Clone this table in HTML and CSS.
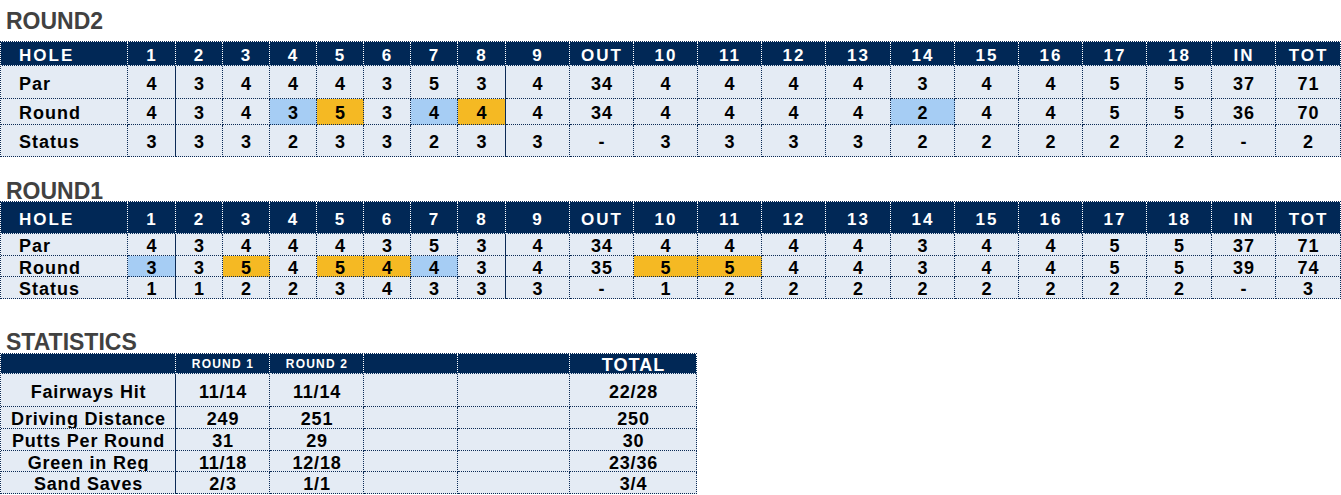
FILE: index.html
```html
<!DOCTYPE html>
<html>
<head>
<meta charset="utf-8">
<link rel="stylesheet" href="styles.css">
</head>
<body>
<section class="block">
  <h2 class="title title-first">ROUND2</h2>
  <div class="sheet rows-r2">
    <div class="c hd lbl">HOLE</div><div class="c hd">1</div><div class="c hd">2</div><div class="c hd">3</div><div class="c hd">4</div><div class="c hd">5</div><div class="c hd">6</div><div class="c hd">7</div><div class="c hd">8</div><div class="c hd">9</div><div class="c hd">OUT</div><div class="c hd">10</div><div class="c hd">11</div><div class="c hd">12</div><div class="c hd">13</div><div class="c hd">14</div><div class="c hd">15</div><div class="c hd">16</div><div class="c hd">17</div><div class="c hd">18</div><div class="c hd">IN</div><div class="c hd">TOT</div>

    <div class="c lbl">Par</div><div class="c sep">4</div><div class="c">3</div><div class="c">4</div><div class="c">4</div><div class="c">4</div><div class="c">3</div><div class="c">5</div><div class="c sep">3</div><div class="c">4</div><div class="c">34</div><div class="c">4</div><div class="c">4</div><div class="c">4</div><div class="c">4</div><div class="c">3</div><div class="c">4</div><div class="c">4</div><div class="c">5</div><div class="c">5</div><div class="c">37</div><div class="c">71</div>

    <div class="c lbl">Round</div><div class="c sep">4</div><div class="c">3</div><div class="c">4</div><div class="c blue">3</div><div class="c gold">5</div><div class="c">3</div><div class="c blue">4</div><div class="c gold sep">4</div><div class="c">4</div><div class="c">34</div><div class="c">4</div><div class="c">4</div><div class="c">4</div><div class="c">4</div><div class="c blue">2</div><div class="c">4</div><div class="c">4</div><div class="c">5</div><div class="c">5</div><div class="c">36</div><div class="c">70</div>

    <div class="c lbl">Status</div><div class="c sep">3</div><div class="c">3</div><div class="c">3</div><div class="c">2</div><div class="c">3</div><div class="c">3</div><div class="c">2</div><div class="c sep">3</div><div class="c">3</div><div class="c">-</div><div class="c">3</div><div class="c">3</div><div class="c">3</div><div class="c">3</div><div class="c">2</div><div class="c">2</div><div class="c">2</div><div class="c">2</div><div class="c">2</div><div class="c">-</div><div class="c">2</div>
  </div>
</section>

<section class="block">
  <h2 class="title title-second">ROUND1</h2>
  <div class="sheet rows-r1">
    <div class="c hd lbl">HOLE</div><div class="c hd">1</div><div class="c hd">2</div><div class="c hd">3</div><div class="c hd">4</div><div class="c hd">5</div><div class="c hd">6</div><div class="c hd">7</div><div class="c hd">8</div><div class="c hd">9</div><div class="c hd">OUT</div><div class="c hd">10</div><div class="c hd">11</div><div class="c hd">12</div><div class="c hd">13</div><div class="c hd">14</div><div class="c hd">15</div><div class="c hd">16</div><div class="c hd">17</div><div class="c hd">18</div><div class="c hd">IN</div><div class="c hd">TOT</div>

    <div class="c lbl">Par</div><div class="c sep">4</div><div class="c">3</div><div class="c">4</div><div class="c">4</div><div class="c">4</div><div class="c">3</div><div class="c">5</div><div class="c sep">3</div><div class="c">4</div><div class="c">34</div><div class="c">4</div><div class="c">4</div><div class="c">4</div><div class="c">4</div><div class="c">3</div><div class="c">4</div><div class="c">4</div><div class="c">5</div><div class="c">5</div><div class="c">37</div><div class="c">71</div>

    <div class="c lbl">Round</div><div class="c blue sep">3</div><div class="c">3</div><div class="c gold">5</div><div class="c">4</div><div class="c gold">5</div><div class="c gold">4</div><div class="c blue">4</div><div class="c sep">3</div><div class="c">4</div><div class="c">35</div><div class="c gold">5</div><div class="c gold">5</div><div class="c">4</div><div class="c">4</div><div class="c">3</div><div class="c">4</div><div class="c">4</div><div class="c">5</div><div class="c">5</div><div class="c">39</div><div class="c">74</div>

    <div class="c lbl">Status</div><div class="c sep">1</div><div class="c">1</div><div class="c">2</div><div class="c">2</div><div class="c">3</div><div class="c">4</div><div class="c">3</div><div class="c sep">3</div><div class="c">3</div><div class="c">-</div><div class="c">1</div><div class="c">2</div><div class="c">2</div><div class="c">2</div><div class="c">2</div><div class="c">2</div><div class="c">2</div><div class="c">2</div><div class="c">2</div><div class="c">-</div><div class="c">3</div>
  </div>
</section>

<section class="block">
  <h2 class="title title-third">STATISTICS</h2>
  <div class="stats">
    <div class="c hd"></div><div class="c hd small">ROUND 1</div><div class="c hd small">ROUND 2</div><div class="c hd"></div><div class="c hd"></div><div class="c hd big">TOTAL</div>

    <div class="c st sep">Fairways Hit</div><div class="c st">11/14</div><div class="c st">11/14</div><div class="c st"></div><div class="c st"></div><div class="c st">22/28</div>
    <div class="c st sep">Driving Distance</div><div class="c st">249</div><div class="c st">251</div><div class="c st"></div><div class="c st"></div><div class="c st">250</div>
    <div class="c st sep">Putts Per Round</div><div class="c st">31</div><div class="c st">29</div><div class="c st"></div><div class="c st"></div><div class="c st">30</div>
    <div class="c st sep">Green in Reg</div><div class="c st">11/18</div><div class="c st">12/18</div><div class="c st"></div><div class="c st"></div><div class="c st">23/36</div>
    <div class="c st sep">Sand Saves</div><div class="c st">2/3</div><div class="c st">1/1</div><div class="c st"></div><div class="c st"></div><div class="c st">3/4</div>
  </div>
</section>
</body>
</html>
```

FILE: styles.css
```css
html, body {
  margin: 0;
  padding: 0;
  background: #ffffff;
}

body {
  font-family: "Liberation Sans", Arial, sans-serif;
  color: #000;
}

.block {
  display: flex;
  flex-direction: column;
  align-items: flex-start;
}

.title {
  margin: 0;
  font-size: 23px;
  font-weight: bold;
  line-height: 16px;
  color: #414141;
  padding-left: 6px;
}

.title-first { padding-top: 13px; padding-bottom: 12px; }
.title-second { padding-top: 26px; padding-bottom: 2px; }
.title-third { padding-top: 35px; padding-bottom: 3px; }

.sheet {
  display: grid;
  grid-template-columns: 127px 48px 47px 47px 47px 47px 47px 47px 48px 64px 64px 64px 64px 64px 65px 64px 64px 64px 64px 65px 64px 65px;
  border-top: 1px dotted #0b2a55;
  border-left: 1px dotted #0b2a55;
  background: #fff;
}

.rows-r2 { grid-template-rows: 24px 33px 26px 32px; }
.rows-r1 { grid-template-rows: 32px 22px 21px 22px; }

.c {
  box-sizing: border-box;
  display: flex;
  align-items: center;
  justify-content: center;
  background: #e4ebf4;
  border-right: 1px dotted #0b2a55;
  border-bottom: 1px dotted #0b2a55;
  font-size: 18px;
  font-weight: bold;
  letter-spacing: 1px;
  padding-left: 1px;
  padding-top: 4px;
  white-space: nowrap;
  overflow: hidden;
}

.c.lbl {
  justify-content: flex-start;
  padding-left: 18px;
}

.c.sep {
  border-right: 1px solid #0b2a55;
}

.c.hd {
  background: #012856;
  color: #fff;
  border-right-color: #ffffff;
  border-bottom-color: #e4ebf4;
  font-size: 17px;
  letter-spacing: 2px;
}

.c.blue { background: #a6cdf4; }
.c.gold { background: #f5b923; }

.stats {
  display: grid;
  grid-template-columns: 175px 94px 94px 94px 112px 127px;
  grid-template-rows: 20px 33px 22px 22px 21px 22px;
  border-top: 1px dotted #0b2a55;
  border-left: 1px dotted #0b2a55;
  background: #fff;
}

.c.st {
  letter-spacing: 0.8px;
}

.c.small {
  font-size: 12px;
  letter-spacing: 1.2px;
  padding-top: 0;
}

.c.big {
  font-size: 18px;
  letter-spacing: 1px;
  align-items: flex-start;
  padding-top: 1px;
}
```
